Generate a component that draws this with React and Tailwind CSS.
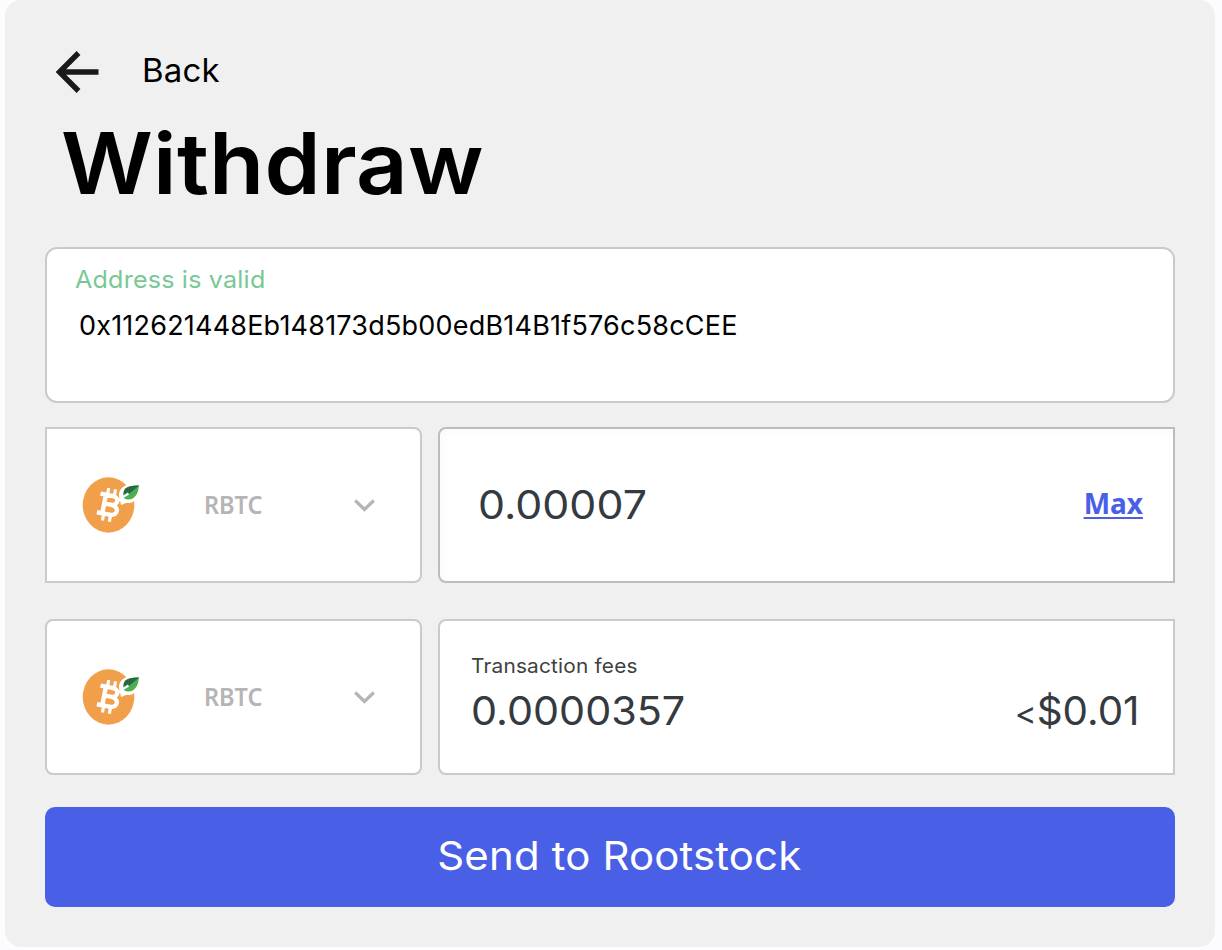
function RbtcLogo() {
  return (
    <svg className="h-[60px] w-[60px] shrink-0" viewBox="0 0 60 60" fill="none">
      <ellipse cx="27.5" cy="30" rx="25.8" ry="27.7" fill="#f29f4b" />
      <path d="M38 21C37 14 45 7 60 7C61 22 53 29 45 28L40 30Z" fill="#fff" />
      <g transform="translate(28.5 30) rotate(11)" stroke="#fff" strokeWidth="4.4">
        <path d="M-11 -9.5H1C9 -9.5 9 -0.5 1 -0.5H-5M1.5 -0.5C10.5 -0.5 10.5 9.5 2 9.5H-11M-5.5 -9.5V9.5" />
        <path d="M-4 -16.5V-10M3 -16.5V-10M-4 10V16.5M3 10V16.5" strokeWidth="3.2" />
      </g>
      <path d="M43 22C42 13 47 10 58 10.5C57 22 51 26 44 24Z" fill="#4caf50" />
      <path d="M43 23C40 13 47 10 58 10.5L51 16.5L43 23Z" fill="#246b43" />
      <path d="M37.5 25.5L42 22L47.5 18.5" stroke="#fff" strokeWidth="2.2" />
    </svg>
  );
}

function TokenSelect({ className }) {
  return (
    <button
      className={`flex h-[156px] w-[377px] shrink-0 items-center border-2 border-[#cacaca] bg-white pl-[34px] ${className}`}
    >
      <RbtcLogo />
      <span className="ml-[63px] inline-block w-[150px] origin-left scale-x-[0.94] text-left font-['Noto_Sans',sans-serif] text-[25px] font-semibold text-[#b5b5b5]">
        RBTC
      </span>
      <svg className="h-4 w-[22px]" viewBox="0 0 22 16" fill="none">
        <path d="M1.2 3.5L10.5 12.5L19.8 3.5" stroke="#b5b5b5" strokeWidth="3.2" />
      </svg>
    </button>
  );
}

export default function App() {
  return (
    <div className="h-[950px] w-[1222px] overflow-hidden bg-[#fcfcfe] pl-[5px] font-['Inter',sans-serif]">
      <main className="flex h-[947px] w-[1210px] flex-col rounded-2xl bg-[#f0f0f0] px-10">
        <button className="mt-[46px] flex h-[50px] items-center pl-[10px]">
          <svg className="h-[44px] w-[46px]" viewBox="0 0 46 44" fill="none">
            <path d="M23.5 4L4.5 23L23.5 42M4 23H43.5" stroke="#191919" strokeWidth="5.4" />
          </svg>
          <span className="ml-[41px] inline-block origin-left scale-x-[1.03] text-[32px] leading-none tracking-[0.2px] text-black">
            Back
          </span>
        </button>
        <h1 className="mt-[26px] ml-[16px] h-[84px] w-[420px] origin-left scale-x-[1.06] text-[85px] leading-[84px] font-semibold tracking-[0.2px] text-black">
          Withdraw
        </h1>
        <section className="mt-[41px] flex h-[156px] shrink-0 flex-col rounded-xl border-2 border-[#cacaca] bg-white">
          <label className="mt-[18px] ml-[28px] origin-left scale-x-[1.045] self-start text-2xl leading-[26px] tracking-[0.2px] text-[#79c894]">
            Address is valid
          </label>
          <span className="mt-[18px] ml-[32px] text-[27px] leading-[30px] tracking-[0.2px] text-black">
            0x112621448Eb148173d5b00edB14B1f576c58cCEE
          </span>
        </section>
        <section className="mt-6 flex gap-4">
          <TokenSelect className="rounded-r-lg" />
          <div className="flex h-[156px] flex-1 items-center justify-between rounded-l-lg border-2 border-[#bdbdbd] bg-white pr-[30px] pl-[38px] shadow-[inset_4px_4px_8px_rgba(0,0,0,0.02)]">
            <span className="mb-[2px] inline-block origin-left scale-x-[1.1] text-[39px] leading-none text-[#343a40]">0.00007</span>
            <a className="mb-[5px] font-['Noto_Sans',sans-serif] text-[28px] leading-none font-bold text-[#4960e6] underline decoration-2 underline-offset-[3px]">
              Max
            </a>
          </div>
        </section>
        <section className="mt-9 flex gap-4">
          <TokenSelect className="rounded-lg" />
          <div className="flex h-[156px] flex-1 flex-col rounded-l-lg border-2 border-[#cacaca] bg-white pr-[33px] pl-[31px]">
            <span className="mt-[33px] origin-left scale-x-[1.04] self-start text-[20px] leading-6 tracking-[0.2px] text-[#404040]">
              Transaction fees
            </span>
            <div className="mt-[13px] flex justify-between text-[39px] leading-[40px] text-[#343a40]">
              <span className="inline-block origin-left scale-x-[1.06]">0.0000357</span>
              <span className="inline-block origin-right scale-x-[1.035]">
                <span className="text-[32px]">&lt;</span>$0.01
              </span>
            </div>
          </div>
        </section>
        <button className="mt-8 flex h-[100px] shrink-0 items-center justify-center rounded-[10px] bg-[#4960e6] pb-[3px] pl-[19px] text-[39px] leading-none text-white">
          <span className="inline-block scale-x-[1.075] tracking-[0.15px]">Send to Rootstock</span>
        </button>
      </main>
    </div>
  );
}
